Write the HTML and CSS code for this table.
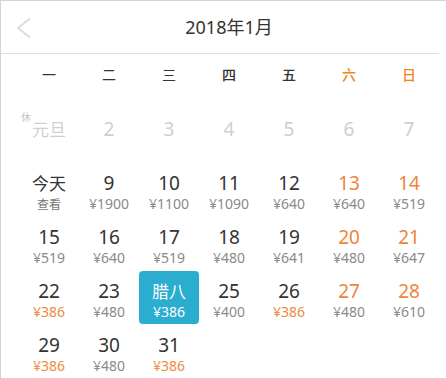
FILE: index.html
```html
<!DOCTYPE html>
<html lang="zh-CN">
<head>
<meta charset="utf-8">
<title>2018年1月</title>
<link rel="stylesheet" href="styles.css">
</head>
<body>
<div class="cal">
  <div class="head">
    <svg class="back" width="16" height="22" viewBox="0 0 16 22"><polyline points="14,1.5 2,11 14,20.5" fill="none" stroke="#dcdcdc" stroke-width="2"/></svg>
    <div class="title">2018年1月</div>
  </div>
  <div class="weeks">
    <span>一</span><span>二</span><span>三</span><span class="bold">四</span><span class="bold">五</span><span class="we">六</span><span class="we">日</span>
  </div>
  <div class="days">
    <div class="cell off"><span class="num cn holiday"><i class="rest">休</i>元旦</span></div>
    <div class="cell off"><span class="num">2</span></div>
    <div class="cell off"><span class="num">3</span></div>
    <div class="cell off"><span class="num">4</span></div>
    <div class="cell off"><span class="num">5</span></div>
    <div class="cell off"><span class="num">6</span></div>
    <div class="cell off"><span class="num">7</span></div>

    <div class="cell"><span class="num cn">今天</span><span class="price look">查看</span></div>
    <div class="cell"><span class="num">9</span><span class="price">¥1900</span></div>
    <div class="cell"><span class="num">10</span><span class="price">¥1100</span></div>
    <div class="cell"><span class="num">11</span><span class="price">¥1090</span></div>
    <div class="cell"><span class="num">12</span><span class="price">¥640</span></div>
    <div class="cell we"><span class="num">13</span><span class="price">¥640</span></div>
    <div class="cell we"><span class="num">14</span><span class="price">¥519</span></div>

    <div class="cell"><span class="num">15</span><span class="price">¥519</span></div>
    <div class="cell"><span class="num">16</span><span class="price">¥640</span></div>
    <div class="cell"><span class="num">17</span><span class="price">¥519</span></div>
    <div class="cell"><span class="num">18</span><span class="price">¥480</span></div>
    <div class="cell"><span class="num">19</span><span class="price">¥641</span></div>
    <div class="cell we"><span class="num">20</span><span class="price">¥480</span></div>
    <div class="cell we"><span class="num">21</span><span class="price">¥647</span></div>

    <div class="cell"><span class="num">22</span><span class="price low">¥386</span></div>
    <div class="cell"><span class="num">23</span><span class="price">¥480</span></div>
    <div class="cell sel"><span class="num cn">腊八</span><span class="price">¥386</span></div>
    <div class="cell"><span class="num">25</span><span class="price">¥400</span></div>
    <div class="cell"><span class="num">26</span><span class="price low">¥386</span></div>
    <div class="cell we"><span class="num">27</span><span class="price">¥480</span></div>
    <div class="cell we"><span class="num">28</span><span class="price">¥610</span></div>

    <div class="cell"><span class="num">29</span><span class="price low">¥386</span></div>
    <div class="cell"><span class="num">30</span><span class="price">¥480</span></div>
    <div class="cell"><span class="num">31</span><span class="price low">¥386</span></div>
  </div>
</div>
</body>
</html>
```

FILE: styles.css
```css
html, body {
  margin: 0;
  padding: 0;
  background: #fff;
}
body {
  font-family: "Noto Sans", "Noto Sans CJK SC", sans-serif;
  color: #333;
}
.cal {
  width: 446px;
  height: 378px;
  box-sizing: border-box;
  border-left: 1px solid #d4d4d4;
  border-top: 1px solid #d4d4d4;
  overflow: hidden;
}
.head {
  position: relative;
  height: 52px;
  border-bottom: 1px solid #dedede;
  padding-left: 18px;
  width: 420px;
}
.back {
  position: absolute;
  left: 15px;
  top: 16px;
}
.title {
  text-align: center;
  font-size: 18px;
  line-height: 52px;
  color: #333;
  font-family: "Noto Sans", "Noto Sans CJK SC", sans-serif;
}
.weeks {
  display: grid;
  grid-template-columns: repeat(7, 60px);
  padding-left: 18px;
  height: 54px;
  font-family: "Noto Sans CJK SC", sans-serif;
  font-size: 14px;
  line-height: 40px;
  text-align: center;
  color: #333;
}
.weeks .bold { font-weight: 500; }
.weeks .we { color: #f0841f; font-weight: 500; }
.days {
  display: grid;
  grid-template-columns: repeat(7, 60px);
  grid-auto-rows: 53px;
  row-gap: 1px;
  padding-left: 18px;
  padding-top: 1px;
}
.cell {
  display: flex;
  flex-direction: column;
  align-items: center;
  padding-top: 9px;
  box-sizing: border-box;
  border-radius: 4px;
}
.num {
  font-size: 19px;
  line-height: 22px;
  color: #333;
  position: relative;
}
.num.cn {
  font-family: "Noto Sans CJK SC", sans-serif;
  font-size: 17px;
}
.price {
  font-size: 14px;
  line-height: 18px;
  color: #8a8a8a;
  margin-top: 1px;
}
.price.look {
  font-family: "Noto Sans CJK SC", sans-serif;
  font-size: 12px;
  color: #777;
}
.price.low { color: #f08a3c; }
.cell.we .num { color: #f0843a; }
.cell.off .num { color: #cfcfcf; }
.holiday { margin-left: 0; }
.rest {
  position: absolute;
  font-style: normal;
  font-size: 10px;
  line-height: 10px;
  color: #c4c4c4;
  left: -11px;
  top: -6px;
}
.cell.sel {
  background: #2aadce;
}
.cell.sel .num, .cell.sel .price { color: #fff; }
```
